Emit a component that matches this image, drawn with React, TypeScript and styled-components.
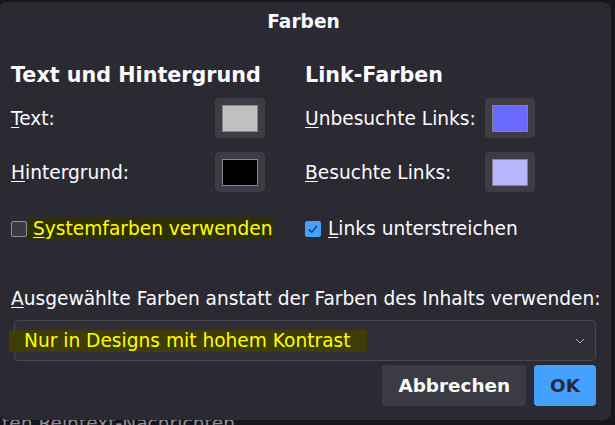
import styled, { createGlobalStyle } from 'styled-components';

const GlobalStyle = createGlobalStyle`
  html, body {
    margin: 0;
    padding: 0;
    background: #17161c;
    font-family: "DejaVu Sans", "Liberation Sans", sans-serif;
    color: #fbfbfe;
  }
`;

const Page = styled.div`
  position: relative;
  width: 615px;
  height: 425px;
  overflow: hidden;
`;

// page content underneath the modal
const BehindText = styled.div`
  padding: 413px 0 0 2px;
  font-size: 18.6px;
  line-height: 21px;
  color: #8e8d94;
  white-space: nowrap;
`;

const Dialog = styled.div`
  position: absolute;
  top: 2px;
  left: -1px;
  width: 612px;
  height: 418px;
  box-sizing: border-box;
  background: #2b2a33;
  border-radius: 8px;
  padding: 0 15px 14px 12px;
  display: flex;
  flex-direction: column;
`;

const Title = styled.div`
  height: 40px;
  line-height: 40px;
  text-align: center;
  font-size: 18.6px;
  font-weight: bold;
`;

const Columns = styled.div`
  display: flex;
  gap: 40px;
  margin-top: 21px;
`;

const Column = styled.div<{ $width?: number }>`
  display: flex;
  flex-direction: column;
  width: ${p => (p.$width ? `${p.$width}px` : 'auto')};
`;

const Heading = styled.div`
  font-size: 20.7px;
  font-weight: bold;
  line-height: 24px;
  margin-bottom: 11px;
  white-space: nowrap;
`;

const ColorRow = styled.div<{ $labelWidth: number }>`
  display: grid;
  grid-template-columns: ${p => p.$labelWidth}px 50px;
  align-items: center;
  height: 40px;
  margin-bottom: 14px;
  font-size: 18.6px;
  white-space: nowrap;
`;

const Key = styled.span`
  text-decoration: underline;
  text-underline-offset: 2px;
`;

const SwatchButton = styled.div`
  width: 50px;
  height: 40px;
  box-sizing: border-box;
  background: #3e3d46;
  border-radius: 4px;
  display: flex;
  align-items: center;
  justify-content: center;
`;

const Swatch = styled.div<{ $color: string }>`
  width: 36px;
  height: 27px;
  box-sizing: border-box;
  border: 1px solid #85858c;
  background: ${p => p.$color};
`;

const CheckRow = styled.div`
  display: flex;
  align-items: center;
  height: 21px;
  margin-top: 12px;
  font-size: 18.6px;
  white-space: nowrap;
`;

const Box = styled.div<{ $checked?: boolean }>`
  width: 16px;
  height: 16px;
  box-sizing: border-box;
  border-radius: 2px;
  border: 1px solid ${p => (p.$checked ? '#45a1ff' : '#8f8f9d')};
  background: ${p => (p.$checked ? '#45a1ff' : '#3b3a43')};
  display: flex;
  align-items: center;
  justify-content: center;
  flex: none;
`;

const CheckLabel = styled.span<{ $marked?: boolean }>`
  margin-left: ${p => (p.$marked ? '1px' : '7px')};
  padding: ${p => (p.$marked ? '0 1px 0 5px' : '0')};
  line-height: 21px;
  background: ${p => (p.$marked ? '#2f2f02' : 'transparent')};
  color: ${p => (p.$marked ? '#ffff00' : '#fbfbfe')};
`;

const ContentLabel = styled.div`
  margin-top: 49px;
  font-size: 18.6px;
  line-height: 21px;
  white-space: nowrap;
`;

const Select = styled.div`
  margin: 11px 0 0 3px;
  height: 41px;
  box-sizing: border-box;
  border: 1px solid #4a4952;
  border-radius: 4px;
  background: #2f2e37;
  display: flex;
  align-items: center;
  justify-content: space-between;
  padding-right: 10px;
`;

const SelectValue = styled.span`
  margin-left: -6px;
  padding: 0 16px 0 15px;
  font-size: 18.6px;
  line-height: 22px;
  background: #3d3d05;
  color: #ffff00;
  white-space: nowrap;
`;

const Buttons = styled.div`
  display: flex;
  justify-content: flex-end;
  gap: 8px;
  margin-top: 4px;
`;

const Button = styled.button<{ $primary?: boolean }>`
  height: 41px;
  padding: 0 16px;
  border: none;
  border-radius: 4px;
  font-family: "DejaVu Sans", "Liberation Sans", sans-serif;
  font-size: 18.4px;
  font-weight: bold;
  background: ${p => (p.$primary ? '#45a1ff' : '#3c3b44')};
  color: ${p => (p.$primary ? '#2b2a33' : '#fbfbfe')};
`;

export default function App() {
  return (
    <Page>
      <GlobalStyle />
      <BehindText>ten Reintext-Nachrichten.</BehindText>
      <Dialog>
        <Title>Farben</Title>
        <Columns>
          <Column $width={254}>
            <Heading>Text und Hintergrund</Heading>
            <ColorRow $labelWidth={204}>
              <span><Key>T</Key>ext:</span>
              <SwatchButton><Swatch $color="#c0c0c0" /></SwatchButton>
            </ColorRow>
            <ColorRow $labelWidth={204}>
              <span><Key>H</Key>intergrund:</span>
              <SwatchButton><Swatch $color="#000000" /></SwatchButton>
            </ColorRow>
            <CheckRow>
              <Box />
              <CheckLabel $marked><Key>S</Key>ystemfarben verwenden</CheckLabel>
            </CheckRow>
          </Column>
          <Column>
            <Heading>Link-Farben</Heading>
            <ColorRow $labelWidth={180}>
              <span><Key>U</Key>nbesuchte Links:</span>
              <SwatchButton><Swatch $color="#6a6aff" /></SwatchButton>
            </ColorRow>
            <ColorRow $labelWidth={180}>
              <span><Key>B</Key>esuchte Links:</span>
              <SwatchButton><Swatch $color="#b6b6ff" /></SwatchButton>
            </ColorRow>
            <CheckRow>
              <Box $checked>
                <svg width="14" height="14" viewBox="0 0 14 14">
                  <path d="M3 7.5 L5.8 10.3 L11 3.8" fill="none" stroke="#2b2a33" strokeWidth="1.3" />
                </svg>
              </Box>
              <CheckLabel><Key>L</Key>inks unterstreichen</CheckLabel>
            </CheckRow>
          </Column>
        </Columns>
        <ContentLabel><Key>A</Key>usgewählte Farben anstatt der Farben des Inhalts verwenden:</ContentLabel>
        <Select>
          <SelectValue>Nur in Designs mit hohem Kontrast</SelectValue>
          <svg width="10" height="6" viewBox="0 0 10 6">
            <path d="M1 1 L5 5 L9 1" fill="none" stroke="#b0b0b8" strokeWidth="1" />
          </svg>
        </Select>
        <Buttons>
          <Button>Abbrechen</Button>
          <Button $primary>OK</Button>
        </Buttons>
      </Dialog>
    </Page>
  );
}
